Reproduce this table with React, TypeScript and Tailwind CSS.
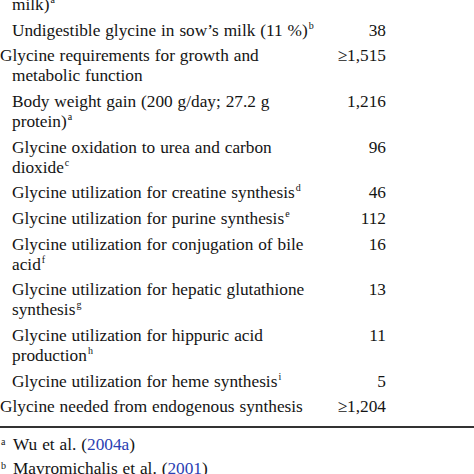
import React from "react";

type Row = {
  lines: React.ReactNode[];
  value?: string;
  sub?: boolean;
};

const Sup = ({ children }: { children: React.ReactNode }) => (
  <span className="relative -top-[7px] ml-[1px] text-[10px] leading-none">{children}</span>
);

const rows: Row[] = [
  { lines: [<>milk)<Sup>a</Sup></>], sub: true },
  { lines: [<>Undigestible glycine in sow’s milk (11 %)<Sup>b</Sup></>], value: "38", sub: true },
  { lines: ["Glycine requirements for growth and", <span className="pl-[12px]">metabolic function</span>], value: "≥1,515" },
  { lines: ["Body weight gain (200 g/day; 27.2 g", <>protein)<Sup>a</Sup></>], value: "1,216", sub: true },
  { lines: ["Glycine oxidation to urea and carbon", <>dioxide<Sup>c</Sup></>], value: "96", sub: true },
  { lines: [<>Glycine utilization for creatine synthesis<Sup>d</Sup></>], value: "46", sub: true },
  { lines: [<>Glycine utilization for purine synthesis<Sup>e</Sup></>], value: "112", sub: true },
  { lines: ["Glycine utilization for conjugation of bile", <>acid<Sup>f</Sup></>], value: "16", sub: true },
  { lines: ["Glycine utilization for hepatic glutathione", <>synthesis<Sup>g</Sup></>], value: "13", sub: true },
  { lines: ["Glycine utilization for hippuric acid", <>production<Sup>h</Sup></>], value: "11", sub: true },
  { lines: [<>Glycine utilization for heme synthesis<Sup>i</Sup></>], value: "5", sub: true },
  { lines: ["Glycine needed from endogenous synthesis"], value: "≥1,204" },
];

export default function App() {
  return (
    <div className="w-[474px] h-[474px] overflow-hidden bg-white text-[#141414] text-[17.3px] leading-[20px] font-['Liberation_Serif','Times_New_Roman',serif] [word-spacing:0.6px]">
      <div className="-mt-[8px] w-[386px]">
        {rows.map((row, i) => (
          <div key={i} className="flex justify-between py-[2.85px]">
            <div className={row.sub ? "pl-[12px] whitespace-nowrap" : "whitespace-nowrap"}>
              {row.lines.map((line, j) => (
                <div key={j}>{line}</div>
              ))}
            </div>
            <div className="text-right whitespace-nowrap">{row.value}</div>
          </div>
        ))}
      </div>

      <div className="mt-[6px] h-[2px] bg-[#333]" />

      <div className="mt-[7px] flex flex-col gap-[4px]">
        <div className="flex">
          <span className="w-[13px] text-[10px] leading-none pt-[2px] pl-[1px]">a</span>
          <span>
            Wu et al. (<span className="text-[#2b3fb3]">2004a</span>)
          </span>
        </div>
        <div className="flex">
          <span className="w-[13px] text-[10px] leading-none pt-[2px] pl-[1px]">b</span>
          <span>
            Mavromichalis et al. (<span className="text-[#2b3fb3]">2001</span>)
          </span>
        </div>
      </div>
    </div>
  );
}
